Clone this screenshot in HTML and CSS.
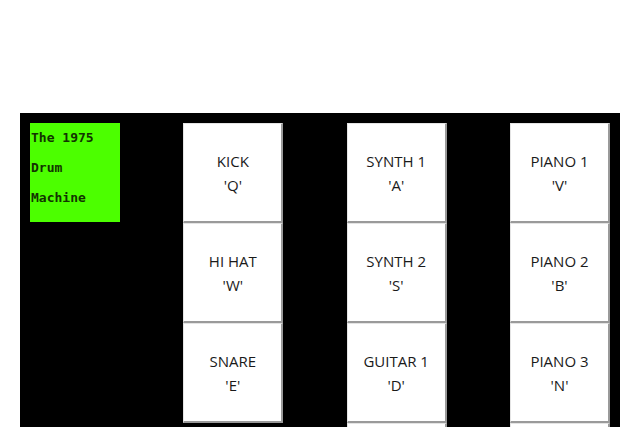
FILE: index.html
```html
<!DOCTYPE html>
<html lang="en">
<head>
  <meta charset="UTF-8" />
  <meta name="viewport" content="width=device-width, initial-scale=1" />
  <title>The 1975 Drum Machine</title>
  <link rel="stylesheet" href="styles.css">
</head>
<body>
  <div class="machine">
    <!-- Title panel -->
    <div class="display">
      <p>The 1975</p>
      <p>Drum</p>
      <p>Machine</p>
    </div>

    <!-- Drum pads -->
    <div class="pad-column">
      <button class="pad">KICK<br>'Q'</button>
      <button class="pad">HI HAT<br>'W'</button>
      <button class="pad">SNARE<br>'E'</button>
    </div>
    <div class="pad-column">
      <button class="pad">SYNTH 1<br>'A'</button>
      <button class="pad">SYNTH 2<br>'S'</button>
      <button class="pad">GUITAR 1<br>'D'</button>
      <button class="pad">GUITAR 2<br>'F'</button>
    </div>
    <div class="pad-column">
      <button class="pad">PIANO 1<br>'V'</button>
      <button class="pad">PIANO 2<br>'B'</button>
      <button class="pad">PIANO 3<br>'N'</button>
      <button class="pad">PIANO 4<br>'M'</button>
    </div>
  </div>
</body>
</html>
```

FILE: styles.css
```css
/* Basic reset */
* {
  margin: 0;
  padding: 0;
  box-sizing: border-box;
}

body {
  background-color: #fff;
  overflow: hidden;
}

/* Black machine body */
.machine {
  margin: 113px 20px 0;
  padding: 10px;
  background-color: #000;
  display: flex;
  justify-content: space-between;
  align-items: flex-start;
  height: 420px;
}

/* Green title panel */
.display {
  width: 90px;
  height: 99px;
  background-color: #4cff00;
  color: #123300;
  font-family: "DejaVu Sans Mono", monospace;
  font-size: 13px;
  font-weight: bold;
  line-height: 30px;
  padding-left: 1px;
}

.pad-column {
  display: flex;
  flex-direction: column;
  width: 100px;
}

/* Pads */
.pad {
  width: 100px;
  height: 100px;
  background-color: #fff;
  color: #1a1a1a;
  font-family: "Open Sans", sans-serif;
  font-size: 15px;
  line-height: 24px;
  border-style: solid;
  border-width: 1px 2px 2px 1px;
  border-color: #e4e4e4 #9a9a9a #9a9a9a #e4e4e4;
  cursor: pointer;
}
```
